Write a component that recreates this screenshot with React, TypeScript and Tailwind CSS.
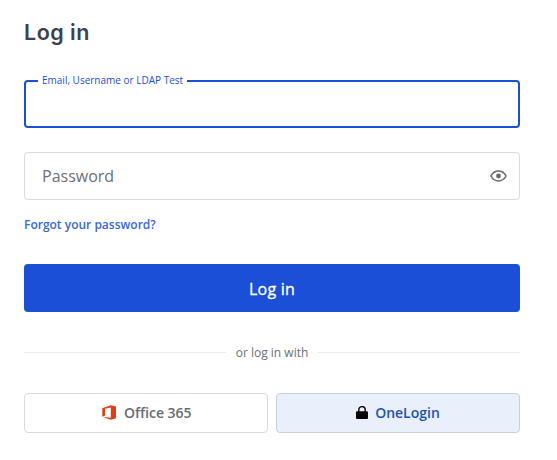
import React from 'react';

function EyeIcon() {
  return (
    <svg width="17" height="12" viewBox="0 0 17 12" fill="none">
      <path d="M1 6C2.7 2.6 5.3 1 8.5 1S14.3 2.6 16 6C14.3 9.4 11.7 11 8.5 11S2.7 9.4 1 6Z" stroke="#686b78" strokeWidth="1.6" strokeLinejoin="round" />
      <circle cx="8.5" cy="6" r="2.4" fill="#686b78" />
    </svg>
  );
}

function OfficeIcon() {
  return (
    <svg className="-mt-0.5" width="14" height="15" viewBox="0 0 14 15">
      <path fill="#dc3e15" fillRule="evenodd" d="M0.3 3.2 8.8 0.3 14 1.6V13.3L8.8 14.7 0.3 11.8 8.8 12.8V2.5L3.2 3.8V10.6L0.3 11.8Z" />
    </svg>
  );
}

function LockIcon() {
  return (
    <svg width="12" height="14" viewBox="0 0 12 14">
      <path d="M2.8 6V3.8a3.2 3.2 0 0 1 6.4 0V6" fill="none" stroke="#000" strokeWidth="1.4" />
      <rect y="5.2" width="12" height="7.8" rx="1.1" />
    </svg>
  );
}

export default function App() {
  return (
    <main className="flex h-[460px] w-[557px] flex-col bg-white pl-6 pr-[37px] pt-[18px] font-['Open_Sans',sans-serif]">
      <h1 className="h-7 font-['Inter',sans-serif] text-[21.5px] font-semibold leading-7 tracking-[0.5px] text-[#3d3f4d]">Log in</h1>
      <fieldset className="mt-7 h-[54px] rounded-[4px] border-2 border-[#1b4fd8] pl-3">
        <legend className="h-[14px] px-1 text-[10px] leading-[12px] text-[#1b4fd8]">Email, Username or LDAP Test</legend>
        <input aria-label="Email, Username or LDAP Test" className="block h-[34px] w-full bg-transparent outline-none" />
      </fieldset>
      <div className="mt-6 flex h-12 items-center justify-between rounded-[4px] border border-[#d9dade] pl-[17px] pr-3">
        <span className="text-[16px] leading-6 text-[#6c6e79]">Password</span>
        <EyeIcon />
      </div>
      <a className="mt-4 h-[18px] text-[12px] font-semibold leading-[18px] text-[#3568e0]">Forgot your password?</a>
      <button className="mt-[30px] h-12 rounded-[4px] bg-[#1b4fd8] pt-0.5 text-[16px] font-medium leading-6 tracking-[0.2px] text-white [-webkit-text-stroke:0.3px_white]">Log in</button>
      <div className="mt-8 flex h-[18px] items-center gap-[10px] text-[12px] leading-[18px] text-[#6c6e79]">
        <span className="mb-px h-px flex-1 bg-[#ebebed]" />
        <span>or log in with</span>
        <span className="mb-px h-px flex-1 bg-[#ebebed]" />
      </div>
      <div className="mt-[31px] grid grid-cols-2 gap-2 text-[14px] font-semibold leading-5">
        <button className="flex h-10 items-center justify-center gap-2 rounded-[4px] border border-[#d9dade] bg-white pl-[1.5px] text-[#686b78]">
          <OfficeIcon />
          <span>Office 365</span>
        </button>
        <button className="flex h-10 items-center justify-center gap-[7px] rounded-[4px] border border-[#c8cde0] bg-[#e9effb] text-[#1b54ae]">
          <LockIcon />
          <span>OneLogin</span>
        </button>
      </div>
    </main>
  );
}
